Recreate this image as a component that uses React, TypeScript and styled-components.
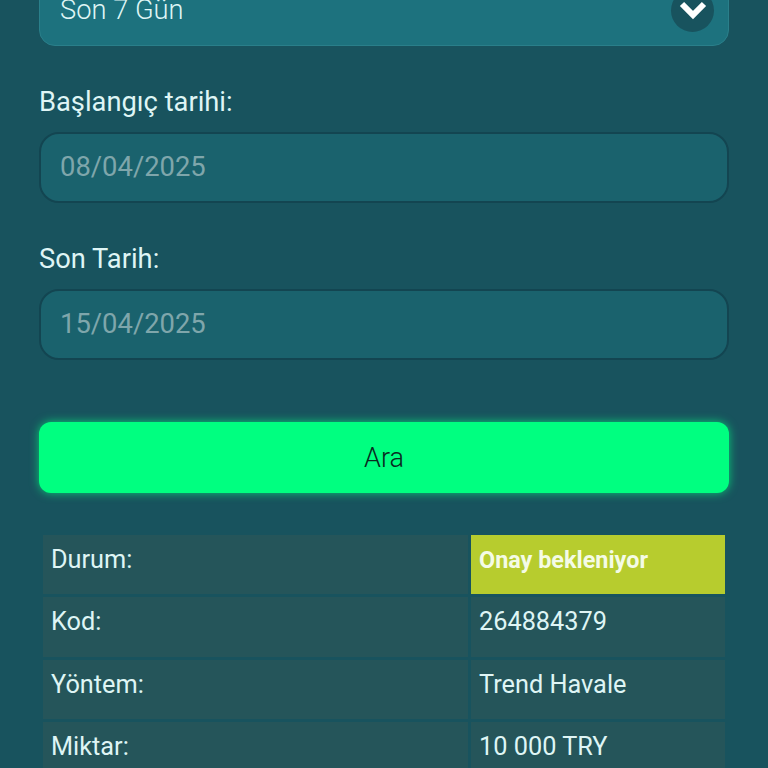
import React from 'react';
import styled, { createGlobalStyle } from 'styled-components';

const GlobalStyle = createGlobalStyle`
  html, body {
    margin: 0;
    padding: 0;
    height: 768px;
    overflow: hidden;
    background: #18535e;
  }
  * {
    box-sizing: border-box;
  }
`;

const Page = styled.div`
  width: 768px;
  height: 768px;
  overflow: hidden;
  padding: 0 39px;
  background: #18535e;
  font-family: Roboto, "Liberation Sans", sans-serif;
  color: #dff5f5;
`;

const SelectBox = styled.div`
  display: flex;
  align-items: center;
  justify-content: space-between;
  height: 70px;
  margin-top: -24px;
  padding: 0 14px 2px 20px;
  border: 1px solid #2a7f8a;
  border-radius: 16px;
  background: #1d727e;
  font-size: 27.3px;
  font-weight: 300;
`;

const Chevron = styled.span`
  display: flex;
  align-items: center;
  justify-content: center;
  width: 43px;
  height: 43px;
  border-radius: 50%;
  background: #18535e;
`;

const Field = styled.div`
  display: flex;
  flex-direction: column;
  gap: 14px;
  margin-top: 40px;
`;

const Label = styled.label`
  font-size: 27.3px;
  line-height: 32px;
  font-weight: 400;
  color: #dff5f5;
`;

const DateInput = styled.div`
  display: flex;
  align-items: center;
  height: 71px;
  padding: 0 19px 2px;
  border: 2px solid #134551;
  border-radius: 20px;
  background: #1a626d;
  font-size: 27.4px;
  color: #7fa6ab;
`;

const SearchButton = styled.button`
  display: block;
  width: 100%;
  height: 71px;
  margin-top: 62px;
  border: 0;
  border-radius: 12px;
  background: #00ff80;
  box-shadow: 0 0 10px rgba(0, 255, 128, 0.7);
  font-family: inherit;
  font-size: 27px;
  font-weight: 300;
  color: #0a2a20;
`;

const Table = styled.div`
  display: grid;
  grid-template-columns: 425px 254px;
  grid-auto-rows: 59.3px;
  gap: 3px;
  margin: 42px 0 0 4px;
`;

const Cell = styled.div<{ $status?: boolean }>`
  display: flex;
  align-items: flex-start;
  padding: 10px 8px 0;
  background: ${props => (props.$status ? '#b7cc2e' : '#25555a')};
  font-size: ${props => (props.$status ? '23.4px' : '25.3px')};
  font-weight: ${props => (props.$status ? 700 : 400)};
  line-height: 30px;
  color: ${props => (props.$status ? '#f4fbe6' : '#dff5f5')};
`;

const rows = [
  ['Kod:', '264884379'],
  ['Yöntem:', 'Trend Havale'],
  ['Miktar:', '10 000 TRY'],
];

export default function App() {
  return (
    <Page>
      <GlobalStyle />
      <SelectBox>
        <span>Son 7 Gün</span>
        <Chevron>
          <svg width="30" height="24" viewBox="0 0 30 24" fill="none">
            <path d="M4 6l11 11L26 6" stroke="#fff" strokeWidth="6" />
          </svg>
        </Chevron>
      </SelectBox>
      <Field>
        <Label>Başlangıç tarihi:</Label>
        <DateInput>08/04/2025</DateInput>
      </Field>
      <Field>
        <Label>Son Tarih:</Label>
        <DateInput>15/04/2025</DateInput>
      </Field>
      <SearchButton>Ara</SearchButton>
      <Table>
        <Cell>Durum:</Cell>
        <Cell $status>Onay bekleniyor</Cell>
        {rows.map(([name, value]) => (
          <React.Fragment key={name}>
            <Cell>{name}</Cell>
            <Cell>{value}</Cell>
          </React.Fragment>
        ))}
      </Table>
    </Page>
  );
}
